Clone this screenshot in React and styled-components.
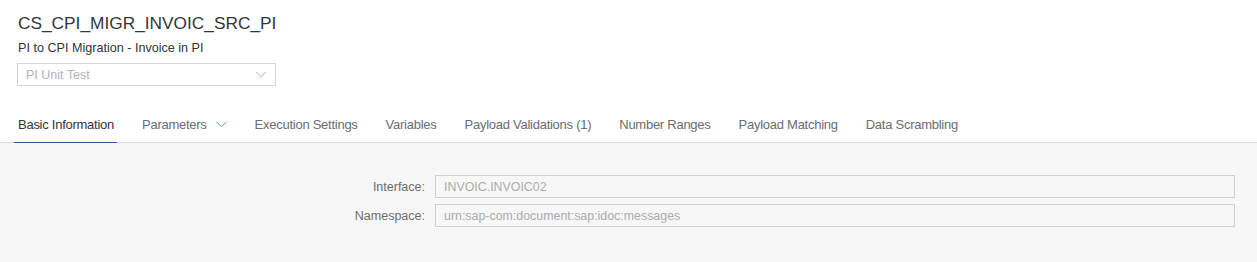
import React from 'react';
import styled, { createGlobalStyle } from 'styled-components';

const GlobalStyle = createGlobalStyle`
  html, body {
    margin: 0;
    padding: 0;
    background: #ffffff;
    font-family: "Liberation Sans", Arial, sans-serif;
  }
`;

const Page = styled.div`
  width: 1257px;
  height: 262px;
  display: flex;
  flex-direction: column;
  background: #ffffff;
  overflow: hidden;
`;

const Header = styled.div`
  padding: 12px 0 0 18px;
  display: flex;
  flex-direction: column;
`;

const Title = styled.h1`
  margin: 0;
  font-size: 17.3px;
  font-weight: normal;
  line-height: 22px;
  color: #32363a;
`;

const Subtitle = styled.div`
  margin-top: 7px;
  font-size: 12.6px;
  line-height: 15px;
  color: #32363a;
`;

const Select = styled.div`
  margin-top: 7px;
  margin-left: -1px;
  height: 21px;
  width: 241px;
  border: 1px solid #d6d6d6;
  display: flex;
  align-items: center;
  justify-content: space-between;
  padding: 0 8px;
  font-size: 12.5px;
  color: #b3b3b3;
`;

const TabBar = styled.div`
  margin-top: 17px;
  display: flex;
  gap: 21px;
  padding-left: 14px;
  border-bottom: 1px solid #dcdcdc;
  height: 39px;
`;

const Tab = styled.div`
  display: flex;
  align-items: center;
  gap: 9px;
  padding: 4px 3px 0 4px;
  height: 42px;
  box-sizing: border-box;
  font-size: 13px;
  letter-spacing: -0.26px;
  color: ${p => (p.$active ? '#32363a' : '#6a6d70')};
  border-bottom: 3px solid ${p => (p.$active ? '#2f5a9e' : 'transparent')};
  white-space: nowrap;
`;

const Body = styled.div`
  flex: 1;
  background: #f7f7f7;
  padding: 32px 22px 0 0;
`;

const Form = styled.div`
  display: grid;
  grid-template-columns: 1fr 800px;
  column-gap: 10px;
  row-gap: 6px;
  align-items: center;
`;

const Label = styled.div`
  text-align: right;
  font-size: 12.5px;
  color: #6a6d70;
`;

const Field = styled.div`
  height: 21px;
  border: 1px solid #cfcfcf;
  display: flex;
  align-items: center;
  padding-left: 8px;
  font-size: 12.4px;
  color: #ababab;
`;

const Chevron = ({ color, width = 11 }) => (
  <svg width={width} height="7" viewBox="0 0 11 7" fill="none">
    <path d="M0.5 0.8 L5.5 5.8 L10.5 0.8" stroke={color} strokeWidth="1" />
  </svg>
);

const tabs = [
  { label: 'Basic Information', active: true },
  { label: 'Parameters', menu: true },
  { label: 'Execution Settings' },
  { label: 'Variables' },
  { label: 'Payload Validations (1)' },
  { label: 'Number Ranges' },
  { label: 'Payload Matching' },
  { label: 'Data Scrambling' },
];

export default function App() {
  return (
    <Page>
      <GlobalStyle />
      <Header>
        <Title>CS_CPI_MIGR_INVOIC_SRC_PI</Title>
        <Subtitle>PI to CPI Migration - Invoice in PI</Subtitle>
        <Select>
          <span>PI Unit Test</span>
          <Chevron color="#9fb0c8" width={12} />
        </Select>
      </Header>
      <TabBar>
        {tabs.map(t => (
          <Tab key={t.label} $active={t.active}>
            {t.label}
            {t.menu && <Chevron color="#6a8ab8" />}
          </Tab>
        ))}
      </TabBar>
      <Body>
        <Form>
          <Label>Interface:</Label>
          <Field>INVOIC.INVOIC02</Field>
          <Label>Namespace:</Label>
          <Field>urn:sap-com:document:sap:idoc:messages</Field>
        </Form>
      </Body>
    </Page>
  );
}
